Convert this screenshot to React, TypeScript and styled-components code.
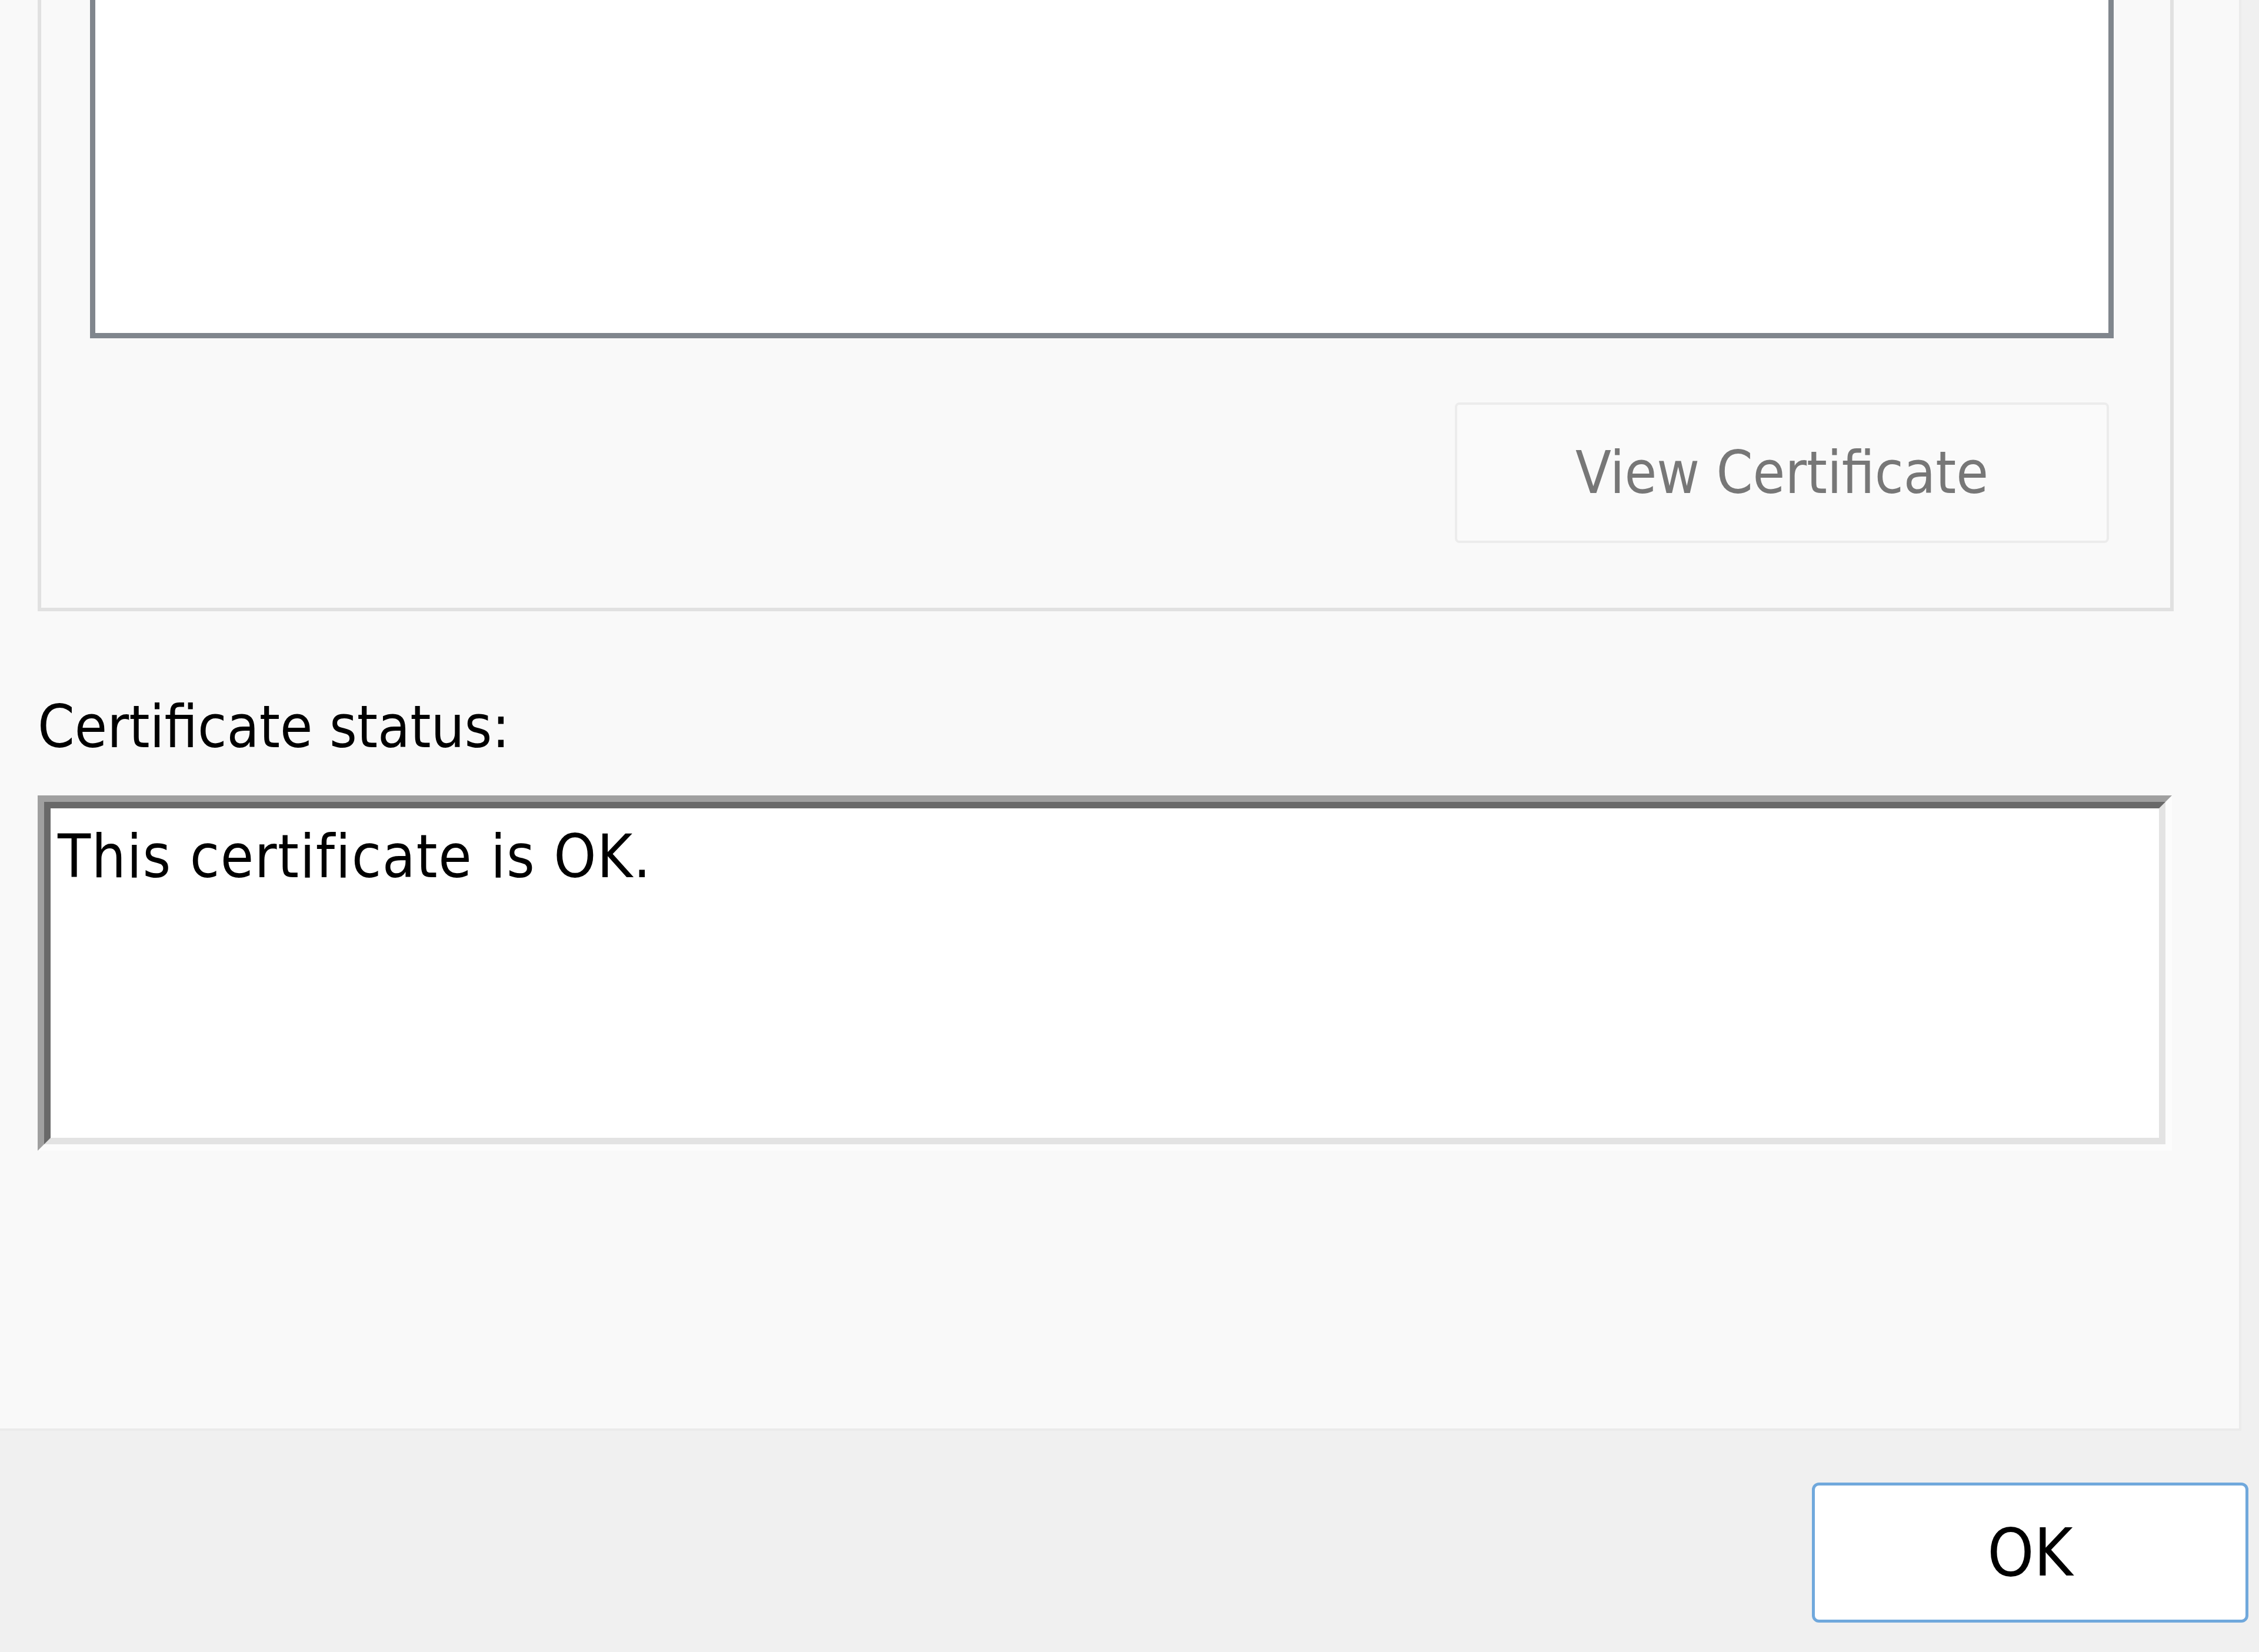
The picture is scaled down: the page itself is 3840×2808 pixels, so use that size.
import styled, { createGlobalStyle } from 'styled-components';

const GlobalStyle = createGlobalStyle`
  html, body {
    margin: 0;
    padding: 0;
  }

  body {
    width: 3840px;
    height: 2808px;
    overflow: hidden;
    background: #f0f0f0;
    font-family: "DejaVu Sans Condensed", "Liberation Sans", sans-serif;
  }
`;

const Dialog = styled.div`
  display: flex;
  flex-direction: column;
  width: 3840px;
  height: 2808px;
`;

const Page = styled.div`
  box-sizing: border-box;
  display: flex;
  flex-direction: column;
  width: 3810px;
  height: 2432px;
  padding-left: 64px;
  background: #f9f9f9;
  border-right: 4px solid #ebebeb;
  border-bottom: 4px solid #ebebeb;
`;

// the top edge of the group box is outside the crop
const GroupBox = styled.div`
  box-sizing: border-box;
  display: flex;
  flex-direction: column;
  width: 3631px;
  height: 1039px;
  padding: 0 96px 110px 83px;
  border: 6px solid #e1e1e1;
  border-top: none;
`;

const ListBox = styled.div`
  box-sizing: border-box;
  flex: 1;
  background: #ffffff;
  border: 9px solid #80868d;
  border-top: none;
`;

const ButtonRow = styled.div`
  display: flex;
  justify-content: flex-end;
  margin-top: 109px;
  padding-right: 8px;
`;

const PushButton = styled.button<{ $disabled?: boolean }>`
  box-sizing: border-box;
  width: 1112px;
  height: 239px;
  padding: 0;
  font-family: inherit;
  font-size: 99px;
  color: ${p => (p.$disabled ? '#777777' : '#000000')};
  background: #fafafa;
  border: 4px solid #ececec;
  border-radius: 8px;
`;

const FieldLabel = styled.div`
  margin-top: 137px;
  font-size: 100px;
  line-height: 120px;
  color: #000000;
`;

const SunkenField = styled.div`
  box-sizing: border-box;
  width: 3628px;
  height: 604px;
  margin-top: 56px;
  background: #ffffff;
  border: 11px solid;
  border-color: #a0a0a0 #fcfcfc #fcfcfc #a0a0a0;
`;

const SunkenInner = styled.div`
  box-sizing: border-box;
  height: 100%;
  padding: 22px 0 0 12px;
  border: 11px solid;
  border-color: #696969 #e3e3e3 #e3e3e3 #696969;
  font-size: 102px;
  letter-spacing: 1.6px;
  line-height: 120px;
  color: #000000;
`;

const ButtonBar = styled.div`
  display: flex;
  flex: 1;
  align-items: flex-start;
  justify-content: flex-end;
  padding: 88px 18px 0 0;
`;

const DefaultButton = styled.button`
  box-sizing: border-box;
  width: 742px;
  height: 238px;
  padding: 0;
  font-family: inherit;
  font-size: 112px;
  color: #000000;
  background: #ffffff;
  border: 5px solid #70a8dc;
  border-radius: 12px;
`;

const App = () => {
  return (
    <Dialog>
      <GlobalStyle />
      <Page>
        <GroupBox>
          <ListBox />
          <ButtonRow>
            <PushButton $disabled>View Certificate</PushButton>
          </ButtonRow>
        </GroupBox>
        <FieldLabel>Certificate status:</FieldLabel>
        <SunkenField>
          <SunkenInner>This certificate is OK.</SunkenInner>
        </SunkenField>
      </Page>
      <ButtonBar>
        <DefaultButton>OK</DefaultButton>
      </ButtonBar>
    </Dialog>
  );
};

export default App;
